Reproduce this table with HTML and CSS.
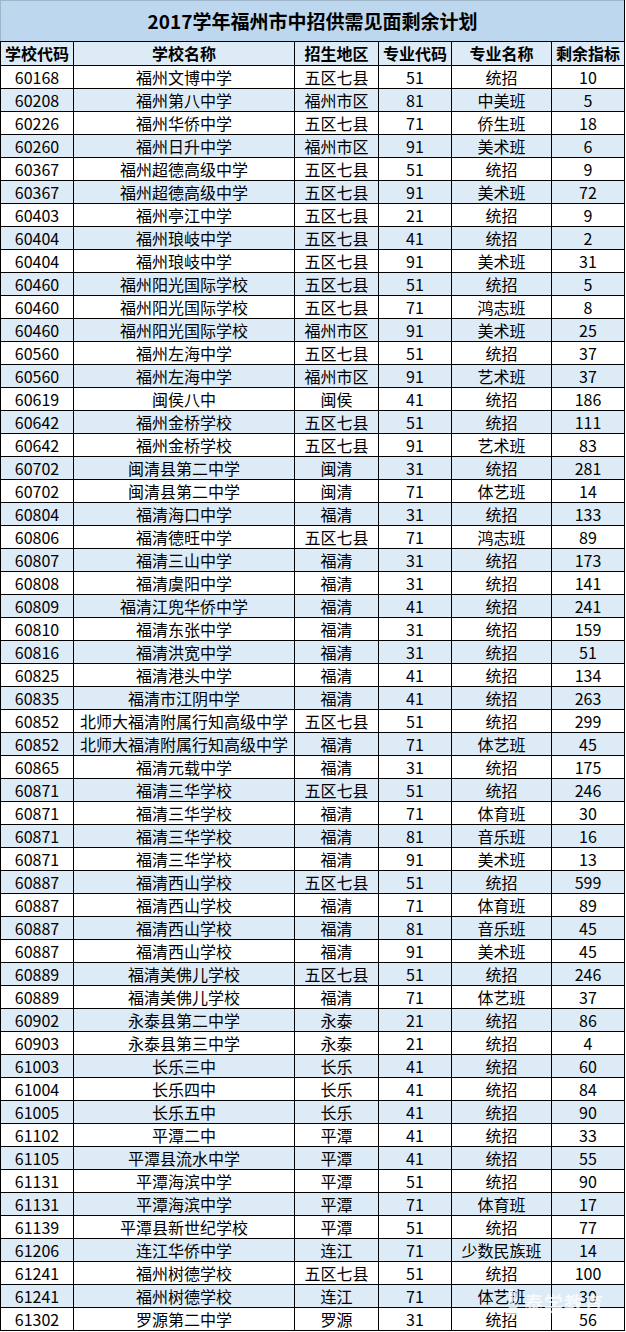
FILE: index.html
```html
<!DOCTYPE html>
<html lang="zh-CN">
<head>
<meta charset="utf-8">
<title>2017学年福州市中招供需见面剩余计划</title>
<link rel="stylesheet" href="styles.css">
</head>
<body>
<div class="wrap">
<table class="plan">
<colgroup>
<col class="c1"><col class="c2"><col class="c3"><col class="c4"><col class="c5"><col class="c6">
</colgroup>
<thead>
<tr class="title"><th colspan="6">2017学年福州市中招供需见面剩余计划</th></tr>
<tr class="head"><th>学校代码</th><th>学校名称</th><th>招生地区</th><th>专业代码</th><th>专业名称</th><th>剩余指标</th></tr>
</thead>
<tbody>
<tr><td>60168</td><td>福州文博中学</td><td>五区七县</td><td>51</td><td>统招</td><td>10</td></tr>
<tr><td>60208</td><td>福州第八中学</td><td>福州市区</td><td>81</td><td>中美班</td><td>5</td></tr>
<tr><td>60226</td><td>福州华侨中学</td><td>五区七县</td><td>71</td><td>侨生班</td><td>18</td></tr>
<tr><td>60260</td><td>福州日升中学</td><td>福州市区</td><td>91</td><td>美术班</td><td>6</td></tr>
<tr><td>60367</td><td>福州超德高级中学</td><td>五区七县</td><td>51</td><td>统招</td><td>9</td></tr>
<tr><td>60367</td><td>福州超德高级中学</td><td>五区七县</td><td>91</td><td>美术班</td><td>72</td></tr>
<tr><td>60403</td><td>福州亭江中学</td><td>五区七县</td><td>21</td><td>统招</td><td>9</td></tr>
<tr><td>60404</td><td>福州琅岐中学</td><td>五区七县</td><td>41</td><td>统招</td><td>2</td></tr>
<tr><td>60404</td><td>福州琅岐中学</td><td>五区七县</td><td>91</td><td>美术班</td><td>31</td></tr>
<tr><td>60460</td><td>福州阳光国际学校</td><td>五区七县</td><td>51</td><td>统招</td><td>5</td></tr>
<tr><td>60460</td><td>福州阳光国际学校</td><td>五区七县</td><td>71</td><td>鸿志班</td><td>8</td></tr>
<tr><td>60460</td><td>福州阳光国际学校</td><td>福州市区</td><td>91</td><td>美术班</td><td>25</td></tr>
<tr><td>60560</td><td>福州左海中学</td><td>五区七县</td><td>51</td><td>统招</td><td>37</td></tr>
<tr><td>60560</td><td>福州左海中学</td><td>福州市区</td><td>91</td><td>艺术班</td><td>37</td></tr>
<tr><td>60619</td><td>闽侯八中</td><td>闽侯</td><td>41</td><td>统招</td><td>186</td></tr>
<tr><td>60642</td><td>福州金桥学校</td><td>五区七县</td><td>51</td><td>统招</td><td>111</td></tr>
<tr><td>60642</td><td>福州金桥学校</td><td>五区七县</td><td>91</td><td>艺术班</td><td>83</td></tr>
<tr><td>60702</td><td>闽清县第二中学</td><td>闽清</td><td>31</td><td>统招</td><td>281</td></tr>
<tr><td>60702</td><td>闽清县第二中学</td><td>闽清</td><td>71</td><td>体艺班</td><td>14</td></tr>
<tr><td>60804</td><td>福清海口中学</td><td>福清</td><td>31</td><td>统招</td><td>133</td></tr>
<tr><td>60806</td><td>福清德旺中学</td><td>五区七县</td><td>71</td><td>鸿志班</td><td>89</td></tr>
<tr><td>60807</td><td>福清三山中学</td><td>福清</td><td>31</td><td>统招</td><td>173</td></tr>
<tr><td>60808</td><td>福清虞阳中学</td><td>福清</td><td>31</td><td>统招</td><td>141</td></tr>
<tr><td>60809</td><td>福清江兜华侨中学</td><td>福清</td><td>41</td><td>统招</td><td>241</td></tr>
<tr><td>60810</td><td>福清东张中学</td><td>福清</td><td>31</td><td>统招</td><td>159</td></tr>
<tr><td>60816</td><td>福清洪宽中学</td><td>福清</td><td>31</td><td>统招</td><td>51</td></tr>
<tr><td>60825</td><td>福清港头中学</td><td>福清</td><td>41</td><td>统招</td><td>134</td></tr>
<tr><td>60835</td><td>福清市江阴中学</td><td>福清</td><td>41</td><td>统招</td><td>263</td></tr>
<tr><td>60852</td><td>北师大福清附属行知高级中学</td><td>五区七县</td><td>51</td><td>统招</td><td>299</td></tr>
<tr><td>60852</td><td>北师大福清附属行知高级中学</td><td>福清</td><td>71</td><td>体艺班</td><td>45</td></tr>
<tr><td>60865</td><td>福清元载中学</td><td>福清</td><td>31</td><td>统招</td><td>175</td></tr>
<tr><td>60871</td><td>福清三华学校</td><td>五区七县</td><td>51</td><td>统招</td><td>246</td></tr>
<tr><td>60871</td><td>福清三华学校</td><td>福清</td><td>71</td><td>体育班</td><td>30</td></tr>
<tr><td>60871</td><td>福清三华学校</td><td>福清</td><td>81</td><td>音乐班</td><td>16</td></tr>
<tr><td>60871</td><td>福清三华学校</td><td>福清</td><td>91</td><td>美术班</td><td>13</td></tr>
<tr><td>60887</td><td>福清西山学校</td><td>五区七县</td><td>51</td><td>统招</td><td>599</td></tr>
<tr><td>60887</td><td>福清西山学校</td><td>福清</td><td>71</td><td>体育班</td><td>89</td></tr>
<tr><td>60887</td><td>福清西山学校</td><td>福清</td><td>81</td><td>音乐班</td><td>45</td></tr>
<tr><td>60887</td><td>福清西山学校</td><td>福清</td><td>91</td><td>美术班</td><td>45</td></tr>
<tr><td>60889</td><td>福清美佛儿学校</td><td>五区七县</td><td>51</td><td>统招</td><td>246</td></tr>
<tr><td>60889</td><td>福清美佛儿学校</td><td>福清</td><td>71</td><td>体艺班</td><td>37</td></tr>
<tr><td>60902</td><td>永泰县第二中学</td><td>永泰</td><td>21</td><td>统招</td><td>86</td></tr>
<tr><td>60903</td><td>永泰县第三中学</td><td>永泰</td><td>21</td><td>统招</td><td>4</td></tr>
<tr><td>61003</td><td>长乐三中</td><td>长乐</td><td>41</td><td>统招</td><td>60</td></tr>
<tr><td>61004</td><td>长乐四中</td><td>长乐</td><td>41</td><td>统招</td><td>84</td></tr>
<tr><td>61005</td><td>长乐五中</td><td>长乐</td><td>41</td><td>统招</td><td>90</td></tr>
<tr><td>61102</td><td>平潭二中</td><td>平潭</td><td>41</td><td>统招</td><td>33</td></tr>
<tr><td>61105</td><td>平潭县流水中学</td><td>平潭</td><td>41</td><td>统招</td><td>55</td></tr>
<tr><td>61131</td><td>平潭海滨中学</td><td>平潭</td><td>51</td><td>统招</td><td>90</td></tr>
<tr><td>61131</td><td>平潭海滨中学</td><td>平潭</td><td>71</td><td>体育班</td><td>17</td></tr>
<tr><td>61139</td><td>平潭县新世纪学校</td><td>平潭</td><td>51</td><td>统招</td><td>77</td></tr>
<tr><td>61206</td><td>连江华侨中学</td><td>连江</td><td>71</td><td>少数民族班</td><td>14</td></tr>
<tr><td>61241</td><td>福州树德学校</td><td>五区七县</td><td>51</td><td>统招</td><td>100</td></tr>
<tr><td>61241</td><td>福州树德学校</td><td>连江</td><td>71</td><td>体艺班</td><td>30</td></tr>
<tr><td>61302</td><td>罗源第二中学</td><td>罗源</td><td>31</td><td>统招</td><td>56</td></tr>
</tbody>
</table>
<div class="watermark">
<svg class="wm-logo" width="14" height="30" viewBox="0 0 14 30" aria-hidden="true"><rect x="3" y="2" width="4" height="14" rx="1"/><rect x="8" y="6" width="3" height="10" rx="1"/><rect x="2" y="20" width="10" height="8" rx="2"/></svg>
<span class="wm-text">泰学教育</span>
</div>
</div>
</body>
</html>
```

FILE: styles.css
```css
html, body {
  margin: 0;
  padding: 0;
  background: #ffffff;
}

.wrap {
  position: relative;
  width: 626px;
}

.plan {
  border-collapse: collapse;
  table-layout: fixed;
  width: 624px;
  font-family: "Noto Sans CJK SC", "Noto Sans", sans-serif;
  color: #000;
  font-size: 16px;
}

.c1 { width: 73px; }
.c2 { width: 221px; }
.c3 { width: 84px; }
.c4 { width: 73px; }
.c5 { width: 100px; }
.c6 { width: 73px; }

.plan th,
.plan td {
  border: 1px solid #000;
  padding: 0;
  text-align: center;
  white-space: nowrap;
  overflow: hidden;
  line-height: 21px;
}

.plan tbody tr {
  height: 23px;
}

.plan td {
  font-weight: 400;
}

.title th {
  height: 40px;
  background: #bdd7ee;
  font-size: 19px;
  font-weight: 700;
  border-top-color: #9fb5c9;
  border-left-color: #9fb5c9;
  line-height: 38px;
}

.head th {
  height: 23px;
  background: #ddebf7;
  font-size: 16px;
  font-weight: 700;
}

.plan tbody tr:nth-child(even) td {
  background: #ddebf7;
}

.watermark {
  position: absolute;
  left: 506px;
  top: 1287px;
  display: flex;
  align-items: center;
  gap: 4px;
  opacity: 0.75;
  pointer-events: none;
}

.wm-logo {
  fill: #ffffff;
}

.wm-text {
  font-family: "Noto Sans CJK SC", sans-serif;
  font-size: 19px;
  font-weight: 700;
  color: #ffffff;
  letter-spacing: 1px;
}
```
